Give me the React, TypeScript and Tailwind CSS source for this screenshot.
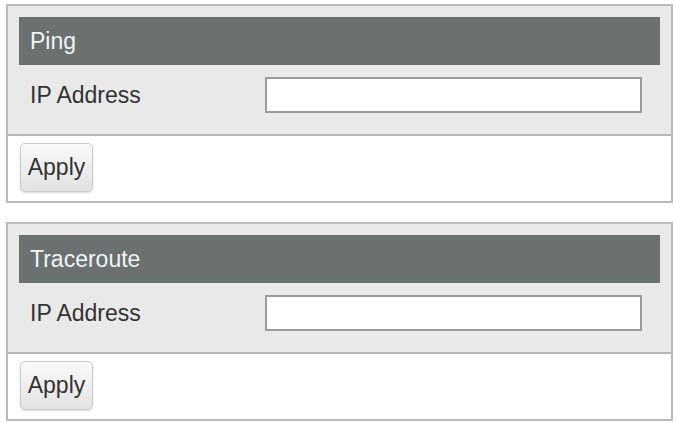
import React from 'react';

const ToolPanel: React.FC<{ title: string }> = ({ title }) => (
    <div className="ml-[6px] w-[667px] border-2 border-[#b9bcbc] bg-white">
        <div className="bg-[#e9e9e9] px-[11px] pt-[11px] border-b-2 border-[#b4b6b6]">
            <div className="h-[48px] bg-[#6b7070] flex items-center pl-[11px] text-[23px] text-[#f2f4f6]">
                {title}
            </div>
            <div className="h-[69px] flex items-start pt-[12px]">
                <label className="w-[246px] pl-[11px] h-[36px] flex items-center text-[23px] text-[#333]">IP Address</label>
                <input type="text" className="w-[377px] h-[36px] bg-white border-2 border-[#9a9c9c] outline-none" />
            </div>
        </div>
        <div className="h-[65px] pl-[12px] pt-[7px]">
            <button className="w-[73px] h-[49px] rounded-[5px] border border-[#c9cbcb] bg-gradient-to-b from-[#fafafa] to-[#e2e2e2] text-[23px] text-[#333] shadow-[0_1px_2px_rgba(0,0,0,0.15)]">
                Apply
            </button>
        </div>
    </div>
);

export default function App() {
    return (
        <div className="w-[676px] h-[423px] bg-white pt-[4px] flex flex-col gap-[19px]" style={{ fontFamily: '"Liberation Sans", Arial, sans-serif' }}>
            <ToolPanel title="Ping" />
            <ToolPanel title="Traceroute" />
        </div>
    );
}
